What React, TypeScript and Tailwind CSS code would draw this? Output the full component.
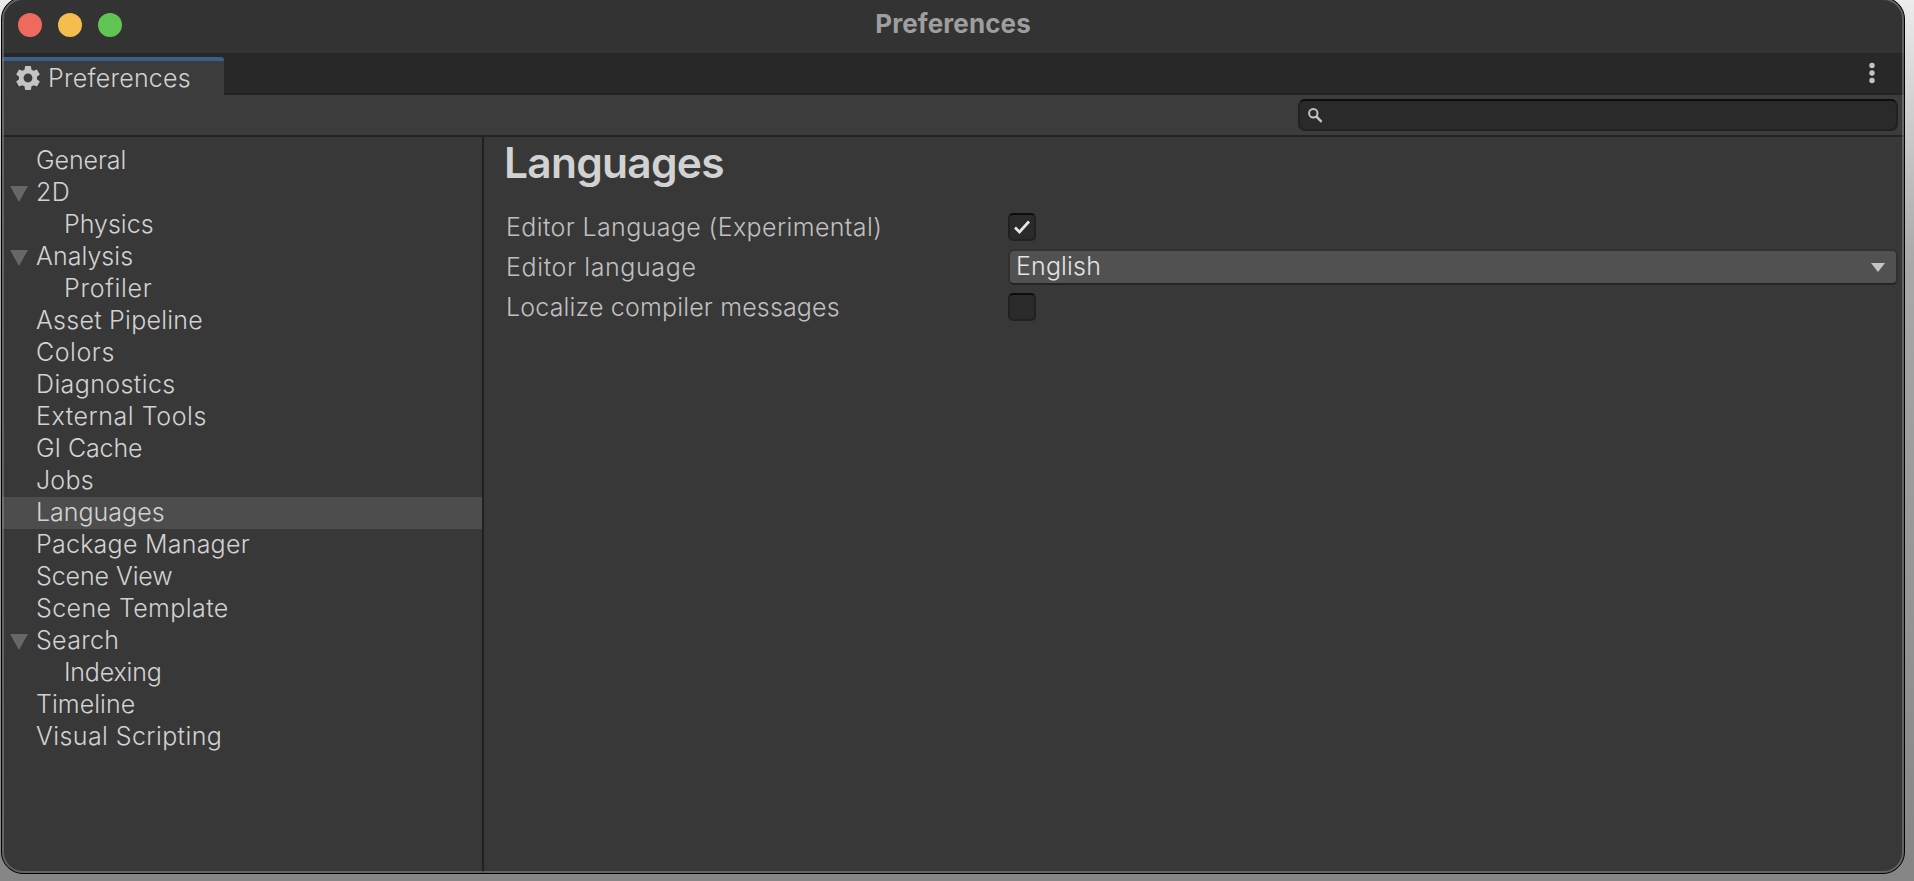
import React from "react";

type Item = { label: string; child?: boolean; open?: boolean; active?: boolean; track: string };

const items: Item[] = [
  { label: "General", track: "tracking-[-0.1px]" },
  { label: "2D", open: true, track: "tracking-[0.5px]" },
  { label: "Physics", child: true, track: "tracking-[0px]" },
  { label: "Analysis", open: true, track: "tracking-[0.05px]" },
  { label: "Profiler", child: true, track: "tracking-[0.7px]" },
  { label: "Asset Pipeline", track: "tracking-[0.25px]" },
  { label: "Colors", track: "tracking-[0.55px]" },
  { label: "Diagnostics", track: "tracking-[0.4px]" },
  { label: "External Tools", track: "tracking-[0.55px]" },
  { label: "GI Cache", track: "tracking-[-0.1px]" },
  { label: "Jobs", track: "tracking-[0.2px]" },
  { label: "Languages", active: true, track: "tracking-[0px]" },
  { label: "Package Manager", track: "tracking-[0.25px]" },
  { label: "Scene View", track: "tracking-[-0.1px]" },
  { label: "Scene Template", track: "tracking-[0.4px]" },
  { label: "Search", open: true, track: "tracking-[0.3px]" },
  { label: "Indexing", child: true, track: "tracking-[-0.2px]" },
  { label: "Timeline", track: "tracking-[0.05px]" },
  { label: "Visual Scripting", track: "tracking-[0.4px]" },
];

function SidebarRow({ item }: { item: Item }) {
  return (
    <div className={"flex h-8 items-center " + (item.active ? "bg-[#4d4d4d]" : "")}>
      <div className={item.child ? "w-[62px] shrink-0" : "w-[34px] shrink-0 pl-2"}>
        {item.open && (
          <svg className="mt-[2px] block" width="18" height="16" viewBox="0 0 18 16">
            <path d="M0 0H18L9 16Z" fill="#676767" />
          </svg>
        )}
      </div>
      <span className={"pb-[3px] whitespace-nowrap text-[25px] leading-8 text-[#d2d2d2] " + item.track}>{item.label}</span>
    </div>
  );
}

function Checkbox({ checked }: { checked?: boolean }) {
  return (
    <div className="flex h-7 w-7 items-center justify-center rounded-[5px] border-2 border-[#212121] border-t-[#0d0d0d] bg-[#2a2a2a]">
      {checked && (
        <svg width="18" height="16" viewBox="0 0 18 16" fill="none">
          <path d="M2 8.5L6.5 13L16 2.5" stroke="#e6e6e6" strokeWidth="2.7" />
        </svg>
      )}
    </div>
  );
}

function Gear() {
  return (
    <svg width="24" height="24" viewBox="2 2 20 20" className="mb-px block">
      <path
        fill="#c4c4c4"
        d="M19.43 12.98c.04-.32.07-.64.07-.98s-.03-.66-.07-.98l2.11-1.65c.19-.15.24-.42.12-.64l-2-3.46c-.12-.22-.39-.3-.61-.22l-2.49 1c-.52-.4-1.08-.73-1.69-.98l-.38-2.65C14.46 2.18 14.25 2 14 2h-4c-.25 0-.46.18-.49.42l-.38 2.65c-.61.25-1.17.59-1.69.98l-2.49-1c-.23-.09-.49 0-.61.22l-2 3.46c-.13.22-.07.49.12.64l2.11 1.65c-.04.32-.07.65-.07.98s.03.66.07.98l-2.11 1.65c-.19.15-.24.42-.12.64l2 3.46c.12.22.39.3.61.22l2.49-1c.52.4 1.08.73 1.69.98l.38 2.65c.03.24.24.42.49.42h4c.25 0 .46-.18.49-.42l.38-2.65c.61-.25 1.17-.59 1.69-.98l2.49 1c.23.09.49 0 .61-.22l2-3.46c.12-.22.07-.49-.12-.64l-2.11-1.65zM12 15.7c-2.04 0-3.7-1.66-3.7-3.7s1.66-3.7 3.7-3.7 3.7 1.66 3.7 3.7-1.66 3.7-3.7 3.7z"
      />
    </svg>
  );
}

export default function App() {
  return (
    <div className="h-[881px] w-[1914px] overflow-hidden bg-linear-to-b from-[#ececec] via-[#a8a8a8] via-30% to-[#858585] pl-px font-['Inter','Noto_Sans_CJK_JP',sans-serif] font-light">
      <div className="-mt-[3px] h-[877px] w-[1904px] rounded-[22px] border border-black bg-[#383838]">
        <div className="relative flex h-full flex-col overflow-hidden rounded-[21px] bg-[#383838]">
          <div className="flex h-[55px] shrink-0 items-center bg-[#333333] px-4 pb-px">
            <div className="flex flex-1 gap-4">
              <div className="h-6 w-6 rounded-full bg-[#ee6a5f]" />
              <div className="h-6 w-6 rounded-full bg-[#f5bd4f]" />
              <div className="h-6 w-6 rounded-full bg-[#61c554]" />
            </div>
            <div className="pb-[3px] text-[26px] leading-8 font-bold tracking-[0.1px] text-[#9e9e9e]">Preferences</div>
            <div className="flex-1" />
          </div>

          <div className="flex h-[42px] shrink-0 items-end bg-[#282828]">
            <div className="flex h-[38px] w-[222px] items-center rounded-t-[3px] border-t-4 border-[#3a5f8a] bg-[#3c3c3c] pl-3.5">
              <Gear />
              <span className="mb-px ml-2 text-[25px] leading-8 tracking-[0.23px] text-[#d2d2d2]">Preferences</span>
            </div>
            <div className="flex h-[42px] flex-1 justify-end border-b-2 border-[#232323] pr-[29px]">
              <svg width="6" height="40" viewBox="0 0 6 40" fill="#c4c4c4">
                <circle cx="3" cy="12.5" r="2.7" />
                <circle cx="3" cy="20" r="2.7" />
                <circle cx="3" cy="27.5" r="2.7" />
              </svg>
            </div>
          </div>

          <div className="flex h-[42px] shrink-0 justify-end border-b-2 border-[#232323] bg-[#3c3c3c] pt-1 pr-[6px]">
            <div className="flex h-8 w-[600px] items-center rounded-[7px] border-2 border-[#212121] border-t-[#0d0d0d] bg-[#2a2a2a] pl-2">
              <svg className="mt-px" width="15" height="15" viewBox="0 0 15 15" fill="none" stroke="#c4c4c4">
                <circle cx="5.3" cy="5.3" r="4.2" strokeWidth="2" />
                <path d="M8.3 8.3L13.6 13.8" strokeWidth="2.4" />
              </svg>
            </div>
          </div>

          <div className="flex min-h-0 flex-1">
            <div className="w-[482px] shrink-0 border-r-2 border-[#202020] pt-2">
              {items.map((it) => (
                <SidebarRow key={it.label} item={it} />
              ))}
            </div>
            <div className="flex-1 pr-[6px] pl-[22px]">
              <h1 className="-ml-[2px] pt-1 text-[42.5px] leading-[44px] font-semibold tracking-[-0.75px] text-[#d2d2d2]">Languages</h1>
              <div className="mt-[22px] flex h-10 items-center text-[25px] text-[#c0c0c0]">
                <span className="w-[502px] shrink-0 pt-0.5 tracking-[0.38px]">Editor Language (Experimental)</span>
                <Checkbox checked />
              </div>
              <div className="flex h-10 items-center text-[25px] text-[#c0c0c0]">
                <span className="w-[502px] shrink-0 pt-0.5 tracking-[0.62px]">Editor language</span>
                <div className="flex h-9 flex-1 items-center justify-between rounded-[6px] border-2 border-[#303030] border-b-[#242424] bg-[#515151] pr-[11px] pl-1.5 text-[#e4e4e4]">
                  <span className="pb-0.5 leading-8 tracking-[0.15px]">English</span>
                  <svg width="14" height="9" viewBox="0 0 14 9">
                    <path d="M0 0H14L7 9Z" fill="#c4c4c4" />
                  </svg>
                </div>
              </div>
              <div className="flex h-10 items-center text-[25px] text-[#c0c0c0]">
                <span className="w-[502px] shrink-0 pt-0.5 tracking-[0.17px]">Localize compiler messages</span>
                <Checkbox />
              </div>
            </div>
          </div>
          <div className="pointer-events-none absolute inset-0 rounded-[21px] border-2 border-[#9a9a9a]/45" />
        </div>
      </div>
    </div>
  );
}
